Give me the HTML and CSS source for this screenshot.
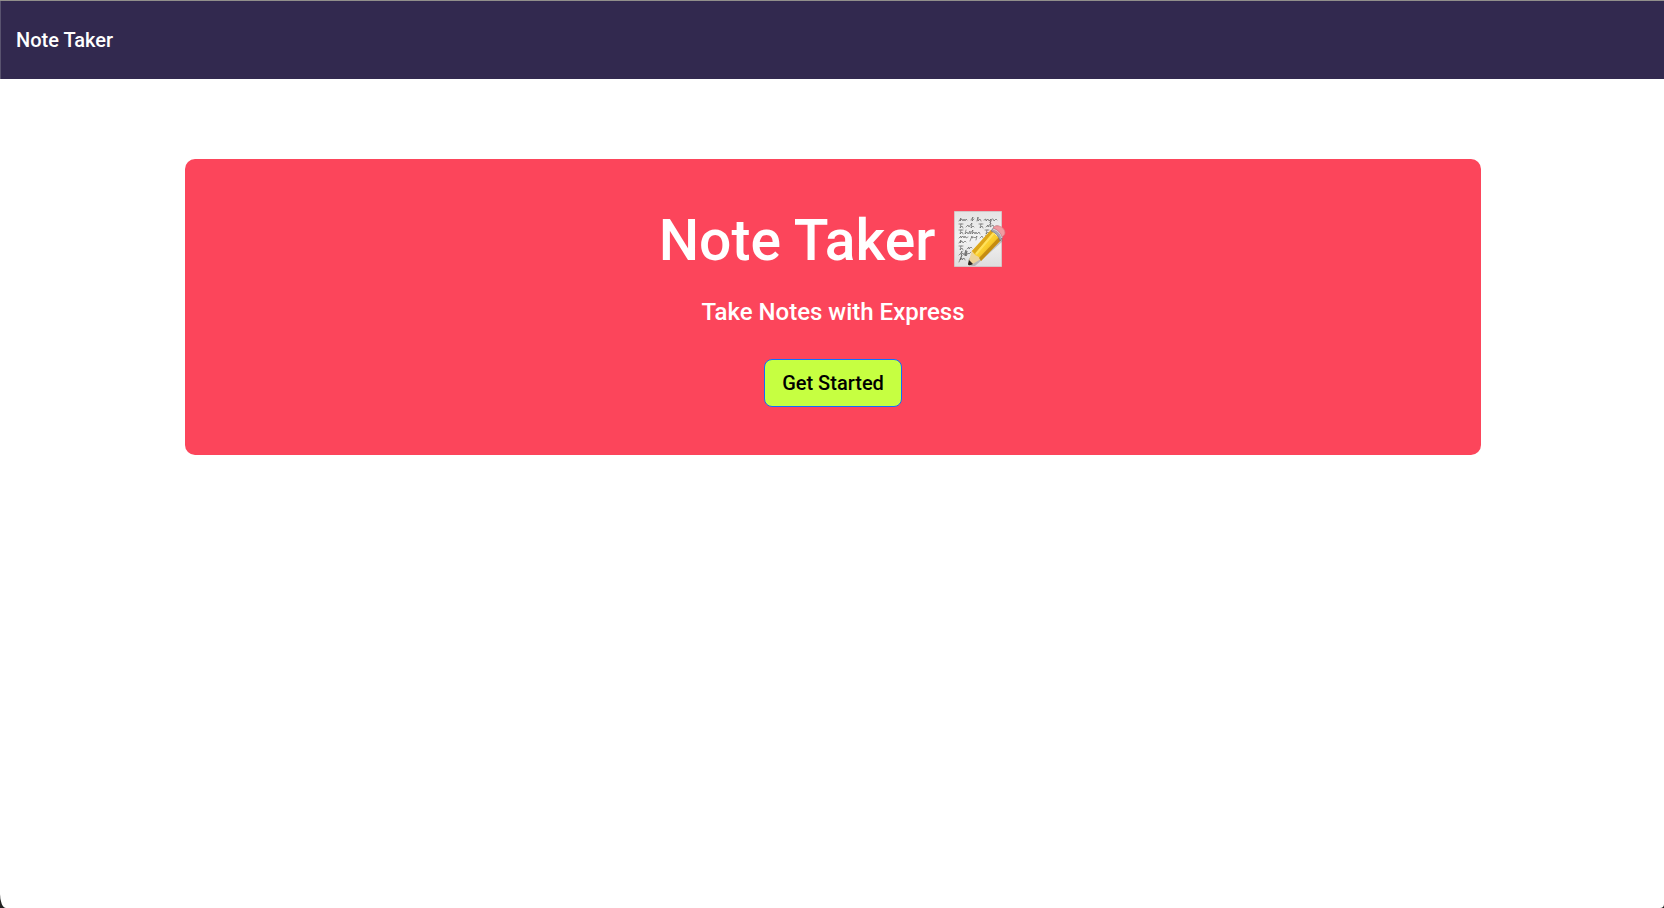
FILE: index.html
```html
<!DOCTYPE html>
<html lang="en">
<head>
  <meta charset="utf-8">
  <meta name="viewport" content="width=device-width, initial-scale=1">
  <title>Note Taker</title>
  <link rel="stylesheet" href="styles.css">
</head>
<body>
  <div class="window">
    <nav class="navbar">
      <a class="navbar-brand" href="/">Note Taker</a>
    </nav>
    <main class="container">
      <section class="hero">
        <h1 class="hero-title">
          <span>Note Taker</span>
          <svg class="memo" viewBox="0 0 54 64" role="img" aria-label="Memo">
            <defs>
              <linearGradient id="paper" x1="0" y1="0" x2="0" y2="1">
                <stop offset="0" stop-color="#e4e4e4"/>
                <stop offset=".5" stop-color="#f2f2f2"/>
                <stop offset="1" stop-color="#dedede"/>
              </linearGradient>
              <linearGradient id="wood" x1="0" y1="0" x2="1" y2="1">
                <stop offset="0" stop-color="#f7c52c"/>
                <stop offset=".5" stop-color="#fbd02f"/>
                <stop offset="1" stop-color="#c98a08"/>
              </linearGradient>
            </defs>
            <path d="M1.500 2.500h47v55h-47z" fill="url(#paper)" stroke="#d6c2c5"/>
            <g fill="none" stroke="#444" stroke-width=".55" stroke-linecap="round" stroke-linejoin="round">
              <path d="M6 12l2-3-1 3 2-2 1 2 1-2 1 2 1-2 1 1M18 11l2-3-1 4 2-2M24 12l1-4 0 4 2-2 1 2M31 11l2-1 0 2 2-2 1 2 2-2-1 4 2-4M40 10l1 2 2-2 1 1"/>
              <path d="M6 15h4M8 15l-1 4 2-2 1 2M13 18l2-2 1 2 2-3 1-1-1 5 2-2 1 1M26 15h4M28 15l-1 4 2-2 1 2M33 18l2-2 0 2 2-3 1-1-1 4 3-2 1 2M43 17h2"/>
              <path d="M6 21h4M8 21l-1 4 2-2 1 2M13 21l-1 4 2-2 1 2 2-3 0 3 2-3 1-1-1 4 2-2 1 2 1-2 1 2 2-2 1 2M32 21h4M34 21l-1 4 2-2 1 1"/>
              <path d="M6 29l2-2 0 2 2-2 1 2 1-2 1 2 2-1M17 32l2-5 0 2 2-1 1 1 2-2-1 4M27 29l2-2 1 2M33 26l-1 3 2-2 1 2"/>
              <path d="M6 34l2-3-1 3 2-2 1 2 2-2 1 1"/>
              <path d="M6 37h4M8 37l-1 4 2-2 1 2M14 40l2-2 0 2 2-2 1 1M22 40l2-2 1 2 2-2"/>
              <path d="M6 46l2-2 1-2-1 4 2-2 1 2 2-5-1 6 2-5-1 5 2-3 1 1 2-2"/>
              <path d="M6 53l3-7-2 5 2-2 0 2 2-2 1 2M16 51l2-3-1 3"/>
            </g>
            <path d="M18 57l4 0 28-25-2-9-29 29z" fill="#777" opacity=".38"/>
            <path d="M15 55l4-14 9 9-10 6q-3 1-3-1z" fill="#ecd39a"/>
            <path d="M15 55l1-4 4 4-2 1q-3 1-3-1z" fill="#292521"/>
            <path d="M19 42l19-21 10 10-20 21q-1-4-4-5-3-1-5-5z" fill="url(#wood)"/>
            <path d="M19 42l19-21 2 2-18 22z" fill="#dca51a"/>
            <path d="M28 52l20-21-2-3-20 21z" fill="#b77b0b" opacity=".75"/>
            <path d="M23 45l18-21" stroke="#ffe15b" stroke-width="2"/>
            <path d="M38 22l3-4q7 2 9 9l-3 5q-2-8-9-10z" fill="#a7a9b2" stroke="#74777f" stroke-width=".7"/>
            <path d="M40 20q7 2 9 9" fill="none" stroke="#d9dae0"/>
            <path d="M40 19q2-3 6-2 6 2 6 7 0 2-3 4-2-7-9-9z" fill="#f09aa0" stroke="#d97c85" stroke-width=".7"/>
          </svg>
        </h1>
        <p class="hero-lead">Take Notes with Express</p>
        <a class="button" href="/notes">Get Started</a>
      </section>
    </main>
  </div>
</body>
</html>
```
FILE: styles.css
```css
* {
  box-sizing: border-box;
}

html {
  background: #222;
}

body {
  margin: 0;
  font-family: Roboto, "Liberation Sans", sans-serif;
  font-weight: 500;
  color: #fff;
}

.window {
  min-height: 100vh;
  border-top: 1px solid #918f8b;
  border-radius: 0 0 4px 6px / 0 0 4px 14px;
  background: #fff;
}

.navbar {
  display: flex;
  align-items: center;
  min-height: 78px;
  padding: 8px 15px;
  border-left: 1px solid #59536f;
  background: #32294f;
}

.navbar-brand {
  font-size: 20px;
  line-height: 30px;
  color: #fff;
  text-decoration: none;
}

.container {
  max-width: 1322px;
  margin: 80px auto 0;
  padding: 0 12px 0 14px;
}

.hero {
  display: flex;
  flex-direction: column;
  align-items: center;
  padding: 48px;
  border-radius: 10px;
  background: #fc455b;
  text-align: center;
}

.hero-title {
  display: flex;
  align-items: center;
  gap: 18px;
  margin: 0 0 19px;
  font-size: 57px;
  font-weight: 500;
  line-height: 68px;
}

.memo {
  width: 54px;
  height: 64px;
}

.hero-lead {
  margin: 0 0 29px;
  font-size: 24px;
  line-height: 36px;
}

.button {
  padding: 8px 17px;
  border: 1px solid #0d6efd;
  border-radius: 8px;
  background: #c6ff41;
  font-size: 20px;
  line-height: 30px;
  color: #000;
  text-decoration: none;
}
```
